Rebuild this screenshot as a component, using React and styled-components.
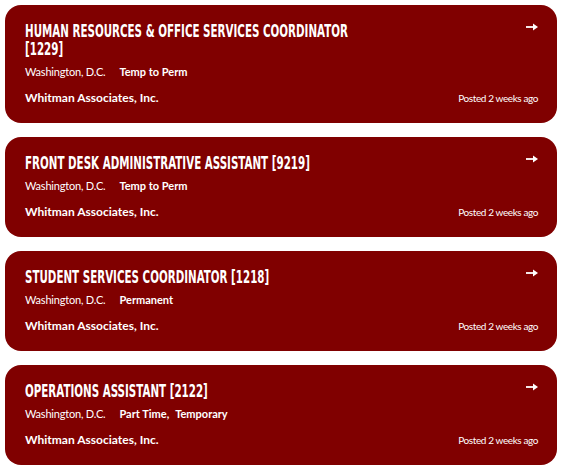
import React from 'react'
import styled, { createGlobalStyle } from 'styled-components'

const GlobalStyle = createGlobalStyle`
  html, body {
    margin: 0;
    padding: 0;
    background: #ffffff;
  }
`

const StyledList = styled.main`
  width: 552px;
  padding: 5px 0 5px 5px;
  display: flex;
  flex-direction: column;
  gap: 14px;
`

const StyledCard = styled.article`
  background-color: #800000;
  border-radius: 16px;
  padding: 17px 19px 18px 20px;
  display: flex;
  flex-direction: column;
  color: #ffffff;
  font-family: Lato, 'Noto Sans', sans-serif;
`

const StyledHeader = styled.div`
  display: flex;
  justify-content: space-between;
  align-items: flex-start;
`

const StyledTitle = styled.h2`
  margin: 0 -199px 0 0;
  width: 549px;
  font-family: 'DejaVu Sans Condensed', 'DejaVu Sans', sans-serif;
  font-weight: 700;
  font-size: 18px;
  line-height: 18px;
  text-transform: uppercase;
  transform: scaleX(0.637);
  transform-origin: left top;
`

const StyledArrow = styled.svg`
  width: 12px;
  height: 8px;
  margin-top: 1px;
  flex-shrink: 0;
`

const StyledMeta = styled.div`
  margin-top: 7px;
  display: flex;
  align-items: baseline;
  font-size: 11px;
  line-height: 14px;
`

const StyledLocation = styled.span`
  margin-right: 14px;
  letter-spacing: -0.2px;
`

const StyledType = styled.span`
  font-weight: 700;
  margin-right: 6px;
`

const StyledFooter = styled.div`
  margin-top: 12px;
  display: flex;
  justify-content: space-between;
  align-items: baseline;
  line-height: 14px;
`

const StyledCompany = styled.span`
  font-size: 12px;
  font-weight: 700;
`

const StyledPosted = styled.span`
  font-size: 10px;
  letter-spacing: -0.4px;
`

const jobs = [
  {
    title: 'Human Resources & Office Services Coordinator [1229]',
    types: ['Temp to Perm'],
  },
  { title: 'Front Desk Administrative Assistant [9219]', types: ['Temp to Perm'] },
  { title: 'Student Services Coordinator [1218]', types: ['Permanent'] },
  { title: 'Operations Assistant [2122]', types: ['Part Time', 'Temporary'] },
]

const Arrow = () => (
  <StyledArrow viewBox="0 0 12 8">
    <path d="M0 3.1h7.5v1.8H0z" fill="#fff" />
    <path d="M7 0.5L12 4L7 7.5z" fill="#fff" />
  </StyledArrow>
)

const JobCard = ({ title, types }) => (
  <StyledCard>
    <StyledHeader>
      <StyledTitle>{title}</StyledTitle>
      <Arrow />
    </StyledHeader>
    <StyledMeta>
      <StyledLocation>Washington, D.C.</StyledLocation>
      {types.map((type, i) => (
        <StyledType key={type}>
          {type}
          {i < types.length - 1 ? ',' : ''}
        </StyledType>
      ))}
    </StyledMeta>
    <StyledFooter>
      <StyledCompany>Whitman Associates, Inc.</StyledCompany>
      <StyledPosted>Posted 2 weeks ago</StyledPosted>
    </StyledFooter>
  </StyledCard>
)

const App = () => (
  <>
    <GlobalStyle />
    <StyledList>
      {jobs.map((job) => (
        <JobCard key={job.title} {...job} />
      ))}
    </StyledList>
  </>
)

export default App
